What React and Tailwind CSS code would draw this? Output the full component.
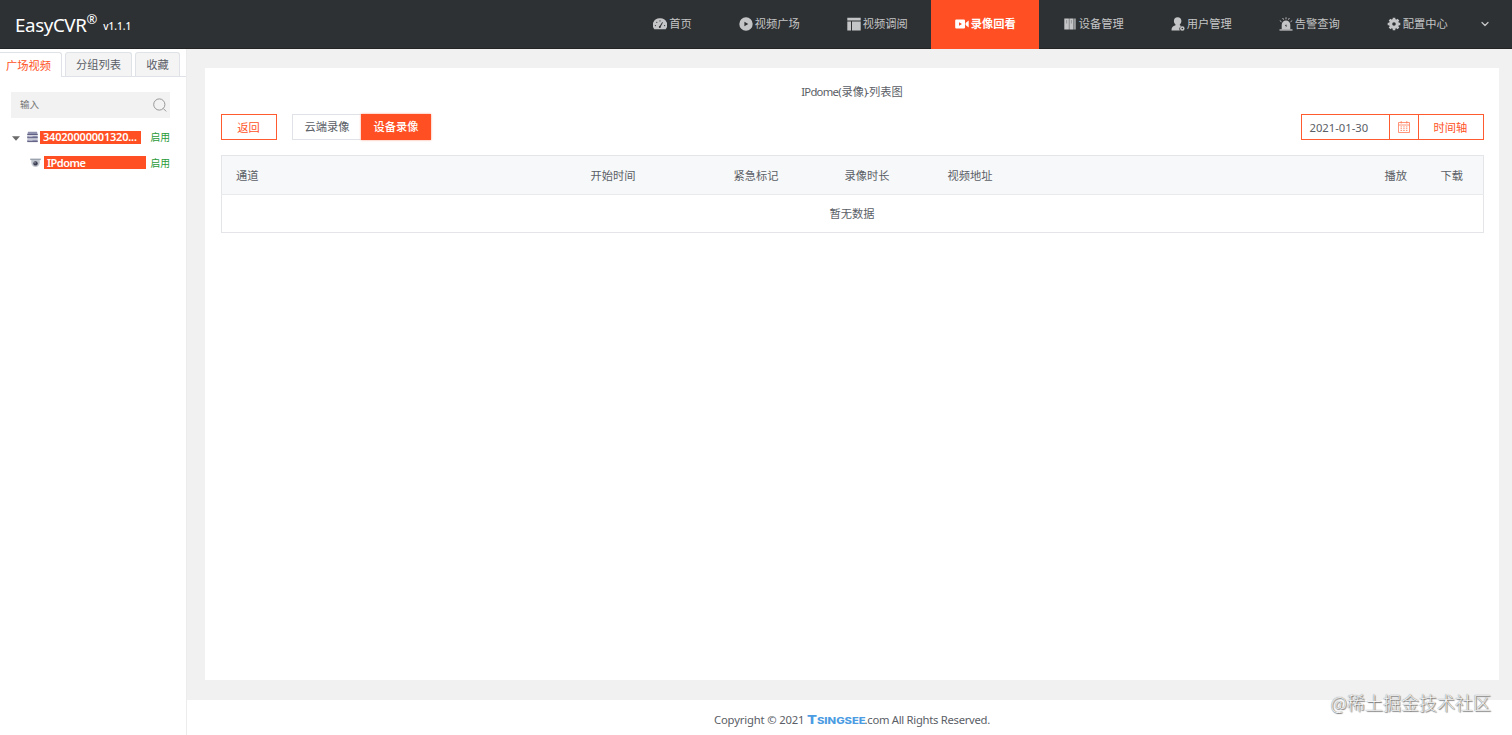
import React from 'react';
import { ChevronDown } from 'lucide-react';

const DashboardIcon = () => (
  <svg viewBox="0 0 14 14" className="w-[14px] h-[14px]" fill="currentColor">
    <path d="M1.300 12.300A6.800 6.800 0 0 1 7 1.200a6.800 6.800 0 0 1 5.700 11.100Z" />
    <g fill="#2e3133">
      <circle cx="2.400" cy="8.600" r=".6" />
      <circle cx="3.800" cy="5.300" r=".6" />
      <circle cx="7" cy="3.900" r=".6" />
      <circle cx="11.600" cy="8.600" r=".6" />
      <circle cx="6.800" cy="10" r="1" />
      <path d="M6.400 9.600 9.300 5l.6.4-2.400 4.700z" />
    </g>
  </svg>
);

const PlayIcon = () => (
  <svg viewBox="0 0 14 14" className="w-[14px] h-[14px]" fill="currentColor">
    <path fillRule="evenodd" d="M7 .3a6.700 6.700 0 1 0 0 13.400A6.700 6.700 0 0 0 7 .3ZM5.400 4.700v4.600L9.300 7Z" />
  </svg>
);

const LayoutIcon = () => (
  <svg viewBox="0 0 14 14" className="w-[14px] h-[14px]" fill="currentColor">
    <path d="M.3.8h13.400v2.800H.3zM.3 4.500h3.700v9H.3zM5 4.500h8.700v9H5z" />
  </svg>
);

const VideoIcon = () => (
  <svg viewBox="0 0 14 14" className="w-[14px] h-[14px]" fill="currentColor">
    <path fillRule="evenodd" d="M1.300 2.500h7.600a1.100 1.100 0 0 1 1.100 1.100v6.800a1.100 1.100 0 0 1-1.100 1.100H1.300a1.100 1.100 0 0 1-1.100-1.100V3.600a1.100 1.100 0 0 1 1.100-1.100ZM4 5.200v3.600L7 7Z" />
    <path d="M10.600 5.900 13.700 3.400v7.200l-3.100-2.500z" />
  </svg>
);

const DeviceIcon = () => (
  <svg viewBox="0 0 14 14" className="w-[14px] h-[14px]" fill="currentColor">
    <path d="M1.300 1.400h4.600v11.200H1.300zM6.300 1.400h4.300v11.200H6.300zM11.300 1.400h1.300v11.200h-1.300z" />
    <path d="M3.600 3v3.500M8.400 3v3.500" stroke="#2e3133" strokeWidth=".3" />
  </svg>
);

const UserIcon = () => (
  <svg viewBox="0 0 14 14" className="w-[14px] h-[14px]" fill="currentColor">
    <path d="M6.600.3c2.400 0 3.800 1.600 3.800 3.800 0 1.400-.6 2.600-1.600 3.400v.8c.6.3 1.200.5 1.700.7a2.900 2.900 0 0 0-1.700 4.400H.5c0-3.200 1.200-4.200 4-5.100v-.8C3.500 6.700 2.900 5.500 2.900 4.100 2.900 1.900 4.200.3 6.600.3Z" />
    <path fillRule="evenodd" d="M11.300 9.200a2.300 2.300 0 1 0 0 4.600 2.300 2.300 0 0 0 0-4.600ZM11.300 10.700a.8.8 0 1 1 0 1.600.8.8 0 0 1 0-1.600Z" />
  </svg>
);

const AlarmIcon = () => (
  <svg viewBox="0 0 14 14" className="w-[14px] h-[14px]" fill="currentColor">
    <path fillRule="evenodd" d="M2.700 12.400V7.800a4.300 4.300 0 0 1 8.600 0v4.600ZM7.300 6.900 5.900 9h1.100l-.3 1.500 1.500-2.100H7.100Z" />
    <path d="M.5 12.300h13v1.300H.5z" />
    <path d="M7 .3v2M3.700 1l.8 1.700M10.300 1l-.8 1.700M.8 3.600l1.700 1.200M13.200 3.600l-1.700 1.200" stroke="currentColor" strokeWidth=".9" />
  </svg>
);

const GearIcon = () => (
  <svg viewBox="0 0 14 14" className="w-[14px] h-[14px]">
    <circle cx="7" cy="7" r="3.400" fill="none" stroke="currentColor" strokeWidth="3.200" />
    <path
      d="M7 .7v2M7 11.300v2M.7 7h2M11.300 7h2M2.600 2.600 4 4M10 10l1.400 1.400M2.600 11.400 4 10M10 4l1.400-1.400"
      stroke="currentColor"
      strokeWidth="2.600"
    />
  </svg>
);

const SearchIcon = () => (
  <svg viewBox="0 0 14 14" className="w-[14px] h-[14px]" fill="none" stroke="#8d8d8d">
    <circle cx="6.300" cy="6.500" r="5.600" strokeWidth=".9" />
    <path d="m10.300 10.500 2.900 2.900" strokeWidth=".9" />
  </svg>
);

const CalendarIcon = () => (
  <svg viewBox="0 0 12 12" className="w-3 h-3" fill="none" stroke="#ff7a58" strokeWidth=".8">
    <path d="M.5 1.500h11v10H.5zM.5 4h11M3.200 0v2.500M8.800 0v2.500" />
    <path d="M2.500 5.900h7M2.500 7.700h7M2.500 9.500h7" strokeDasharray="1.500 1.200" />
  </svg>
);

const ServerIcon = () => (
  <svg viewBox="0 0 11 12" className="w-[11px] h-3">
    <path d="M1 .8h9l.7 2.600v.8H.3v-.8zM.3 5h10.400v2.200H.3zM.3 8.400h10.400v2.400H.3z" fill="#8f90ad" />
    <path d="M.3 3.600h10.400M.3 6.800h10.400M.3 10.600h10.400" stroke="#55567a" strokeWidth=".9" />
    <path d="M1.500 5.600h4M1.500 9.300h4" stroke="#d8d8e6" strokeWidth=".6" />
  </svg>
);

const CameraIcon = () => (
  <svg viewBox="0 0 11 10" className="w-[11px] h-[10px]">
    <path d="M.2.6h10.600v1.500H.2z" fill="#9aa3ae" />
    <path d="M1.300 2.100h8.400v2.600a4.200 4.200 0 0 1-8.400 0z" fill="#c0c6ce" />
    <circle cx="5.500" cy="5.400" r="2.200" fill="#3b3d52" />
    <circle cx="5" cy="4.800" r=".6" fill="#dfe3ea" />
  </svg>
);

const navItems = [
  { label: '首页', icon: DashboardIcon },
  { label: '视频广场', icon: PlayIcon },
  { label: '视频调阅', icon: LayoutIcon },
  { label: '录像回看', icon: VideoIcon, active: true },
  { label: '设备管理', icon: DeviceIcon },
  { label: '用户管理', icon: UserIcon },
  { label: '告警查询', icon: AlarmIcon },
  { label: '配置中心', icon: GearIcon },
];

const Header = () => (
  <header className="h-[49px] shrink-0 flex justify-between bg-[#2e3133] border-b border-[#222425]">
    <div className="flex items-baseline pl-[15px] pt-[9px] text-white">
      <span className="text-[18.750px] leading-8 tracking-[-0.400px]">EasyCVR</span>
      <sup className="text-[13px] leading-none -top-[8px]">®</sup>
      <span className="relative -top-[2px] ml-[6px] text-[10px] font-medium">v1.1.1</span>
    </div>
    <nav className="flex">
      {navItems.map(({ label, icon: Icon, active }) => (
        <a
          key={label}
          className={
            active
              ? 'h-[49px] pb-px flex items-center gap-[2px] px-[23.500px] bg-[#ff4f23] text-white font-semibold'
              : 'h-[48px] flex items-center gap-[2px] px-[23.500px] text-[#c4c5c6]'
          }
        >
          <Icon />
          <span>{label}</span>
        </a>
      ))}
      <button type="button" className="w-[40.750px] h-[48px] pl-2 flex items-center text-[#c4c5c6]">
        <ChevronDown size={12} strokeWidth={2.500} />
      </button>
    </nav>
  </header>
);

const Sidebar = () => (
  <aside className="w-[187px] shrink-0 bg-white border-r border-[#ececec] pt-[3px]">
    <div className="flex h-[25px] border-b border-[#dfe2e6]">
      <div className="w-[62px] h-[25px] pl-[6px] pt-px flex items-center bg-white border-t border-r border-[#dfe2e6] rounded-tr-[3px] text-[#ff5226]">
        广场视频
      </div>
      <div className="ml-[3px] w-[67px] pt-px flex items-center justify-center bg-[#f4f4f5] border border-b-0 border-[#dfe2e6] rounded-t-[3px]">
        分组列表
      </div>
      <div className="ml-[3px] w-[45px] pt-px flex items-center justify-center bg-[#f4f4f5] border border-b-0 border-[#dfe2e6] rounded-t-[3px]">
        收藏
      </div>
    </div>
    <div className="mt-[15px] ml-[11px] w-[159px] h-[26px] pl-[9px] pr-[3px] flex items-center justify-between bg-[#f2f2f2] text-[9.500px] text-[#777]">
      <span>输入</span>
      <SearchIcon />
    </div>
    <ul className="pt-[6px]">
      <li className="h-[26px] pl-[12px] flex items-center">
        <svg viewBox="0 0 8 5" className="w-2 h-[5px] mt-[2px] mr-[7px]" fill="#6b6b6b">
          <path d="M0 .2h8L4 4.700z" />
        </svg>
        <ServerIcon />
        <span className="ml-[2px] w-[101px] h-[13px] pl-[3px] leading-[12px] bg-[#ff4f23] text-white font-semibold text-[11px] tracking-[-0.200px] whitespace-nowrap">
          34020000001320...
        </span>
        <span className="ml-[9.500px] pt-[2px] text-[9.750px] text-[#279a35]">启用</span>
      </li>
      <li className="h-[25px] pl-[30px] flex items-center">
        <CameraIcon />
        <span className="ml-[3px] w-[102px] h-[13px] pl-[3px] leading-[13px] bg-[#ff4f23] text-white font-semibold text-[11px] tracking-[-0.500px]">
          IPdome
        </span>
        <span className="ml-[4.500px] pt-[2px] text-[9.750px] text-[#279a35]">启用</span>
      </li>
    </ul>
  </aside>
);

const Toolbar = () => (
  <div className="h-[26px] flex justify-between">
    <div className="flex">
      <button type="button" className="w-[56px] pt-px border border-[#ff5a30] text-[#ff5226]">
        返回
      </button>
      <button type="button" className="ml-[15.500px] w-[69px] border border-r-0 border-[#dfe2e6]">
        云端录像
      </button>
      <button type="button" className="w-[70px] bg-[#ff4f23] text-white font-medium shadow-[0_0_2px_#ff9a80]">
        设备录像
      </button>
    </div>
    <div className="flex border border-[#ff5a30]">
      <div className="w-[87px] pl-[8px] pt-px flex items-center">2021-01-30</div>
      <div className="w-[30px] flex items-center justify-center border-x border-[#ff5a30]">
        <CalendarIcon />
      </div>
      <button type="button" className="w-[64px] pt-px text-[#ff5226]">
        时间轴
      </button>
    </div>
  </div>
);

const RecordTable = () => (
  <table className="mt-[15px] w-full table-fixed border-collapse border border-[#e3e5e8]">
    <colgroup>
      <col className="w-[355px]" />
      <col className="w-[143px]" />
      <col className="w-[111px]" />
      <col className="w-[103px]" />
      <col />
      <col className="w-[56px]" />
      <col className="w-[57px]" />
    </colgroup>
    <thead>
      <tr className="h-[39px] bg-[#f7f8f9] border-b border-[#e8eaec]">
        {['通道', '开始时间', '紧急标记', '录像时长', '视频地址', '播放', '下载'].map((title) => (
          <th key={title} className="pl-[14.500px] pt-[2px] text-left font-normal">{title}</th>
        ))}
      </tr>
    </thead>
    <tbody>
      <tr className="h-[38px]">
        <td colSpan={7} className="text-center">暂无数据</td>
      </tr>
    </tbody>
  </table>
);

const App = () => {
  return (
    <div className="relative w-full h-[735px] flex flex-col overflow-hidden font-['Noto_Sans','Noto_Sans_CJK_SC',sans-serif] text-[11.250px] leading-4 text-[#5a5e66]">
      <Header />
      <div className="flex-1 flex min-h-0">
        <Sidebar />
        <div className="flex-1 flex flex-col bg-[#f1f1f1]">
          <main className="flex-1 mt-[19px] ml-[18px] mr-[13px] mb-[20px] px-[15.500px] pt-[15px] bg-white">
            <h1 className="h-[31px] pt-px text-center">
              <span className="tracking-[-0.700px]">IPdome</span>(录像)
              <span className="-ml-[2px]">-</span>列表图
            </h1>
            <Toolbar />
            <RecordTable />
          </main>
          <footer className="h-[35px] pt-[5px] flex items-center justify-center bg-white">
            <p className="mr-[-5px] w-[276px] flex items-center whitespace-nowrap">
              <span className="w-[93px] tracking-[-0.150px]">Copyright © 2021</span>
              <span className="w-[58px] pt-px flex items-baseline font-['Inter',sans-serif] font-extrabold text-[#4b9ce2] leading-none origin-left scale-x-[1.280]">
                <span className="text-[11.500px]">T</span>
                <span className="text-[8.750px]">SINGSEE</span>
              </span>
              <span className="tracking-[-0.280px]">.com All Rights Reserved.</span>
            </p>
          </footer>
        </div>
      </div>
      <div className="absolute right-[21px] bottom-[21px] text-[18px] leading-6 font-['Noto_Sans_CJK_SC',sans-serif] font-light text-[#f5f5f5] [text-shadow:0_0_1px_#555,1px_1px_1px_#777]">
        @稀土掘金技术社区
      </div>
    </div>
  );
};

export default App;
